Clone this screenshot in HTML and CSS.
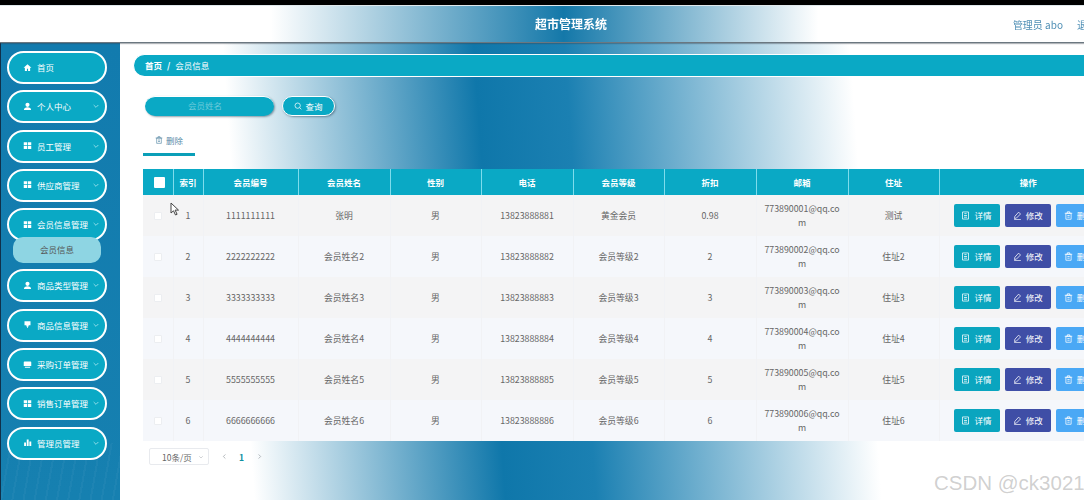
FILE: index.html
```html
<!DOCTYPE html>
<html lang="zh-CN">
<head>
    <meta charset="UTF-8">
    <title>超市管理系统</title>
    <link rel="stylesheet" href="styles.css">
</head>
<body>
    <svg class="sprite" width="0" height="0">
        <symbol id="i-home" viewBox="0 0 24 24"><path fill="currentColor" d="M12 3 1.5 12.5H5V21h5.5v-6h3v6H19v-8.500h3.500z"/></symbol>
        <symbol id="i-user" viewBox="0 0 24 24"><circle fill="currentColor" cx="12" cy="7.500" r="5.500"/><path fill="currentColor" d="M2.500 21.500c0-5 4-7.500 9.500-7.500s9.500 2.500 9.500 7.500z"/></symbol>
        <symbol id="i-grid" viewBox="0 0 24 24"><path fill="currentColor" d="M2 3h9v8H2zM13 3h9v8h-9zM2 13h9v8H2zM13 13h9v8h-9z"/></symbol>
        <symbol id="i-goods" viewBox="0 0 24 24"><path fill="currentColor" d="M4 3h16v11h-5v3h-2v4h-2v-4H9v-3H4z"/></symbol>
        <symbol id="i-order" viewBox="0 0 24 24"><path fill="currentColor" d="M4 4h16a2 2 0 0 1 2 2v10H2V6a2 2 0 0 1 2-2zM5 18h14v2.500H5z"/></symbol>
        <symbol id="i-chart" viewBox="0 0 24 24"><path fill="currentColor" d="M3 12h5v9H3zM10 4h5v17h-5zM17 9h5v12h-5z"/></symbol>
        <symbol id="i-down" viewBox="0 0 24 24"><path fill="none" stroke="currentColor" stroke-width="2.500" d="m5 9 7 7 7-7"/></symbol>
        <symbol id="i-search" viewBox="0 0 24 24"><circle fill="none" stroke="currentColor" stroke-width="2.200" cx="11" cy="11" r="8"/><path fill="none" stroke="currentColor" stroke-width="2.200" d="m17 17 5 5"/></symbol>
        <symbol id="i-doc" viewBox="0 0 24 24"><path fill="none" stroke="currentColor" stroke-width="2" d="M4 2.500h16v19H4zM8 12h8M8 16.500h8M9 7h6"/></symbol>
        <symbol id="i-edit" viewBox="0 0 24 24"><path fill="none" stroke="currentColor" stroke-width="2" d="M15 3l5 5L9 19l-5 1 1-6zM3 23h18"/></symbol>
        <symbol id="i-trash" viewBox="0 0 24 24"><path fill="none" stroke="currentColor" stroke-width="2" d="M5 6h14v16H5zM2 6h20M9 6V2h6v4M9 12h6M9 16.500h6"/></symbol>
        <symbol id="i-left" viewBox="0 0 24 24"><path fill="none" stroke="currentColor" stroke-width="2.500" d="m15 5-7 7 7 7"/></symbol>
        <symbol id="i-right" viewBox="0 0 24 24"><path fill="none" stroke="currentColor" stroke-width="2.500" d="m9 5 7 7-7 7"/></symbol>
    </svg>

    <div class="topbar"></div>
    <header class="header">
        <h1>超市管理系统</h1>
        <div class="user-info"><span>管理员 abo</span><span>退出登录</span></div>
    </header>

    <div class="layout">
        <!-- 侧边菜单 -->
        <aside class="sidebar">
            <a class="menu-item"><svg class="menu-icon"><use href="#i-home"/></svg>首页</a>
            <a class="menu-item"><svg class="menu-icon"><use href="#i-user"/></svg>个人中心<svg class="menu-arrow"><use href="#i-down"/></svg></a>
            <a class="menu-item"><svg class="menu-icon"><use href="#i-grid"/></svg>员工管理<svg class="menu-arrow"><use href="#i-down"/></svg></a>
            <a class="menu-item"><svg class="menu-icon"><use href="#i-grid"/></svg>供应商管理<svg class="menu-arrow"><use href="#i-down"/></svg></a>
            <a class="menu-item"><svg class="menu-icon"><use href="#i-grid"/></svg>会员信息管理<svg class="menu-arrow"><use href="#i-down"/></svg></a>
            <a class="submenu-item">会员信息</a>
            <a class="menu-item"><svg class="menu-icon"><use href="#i-user"/></svg>商品类型管理<svg class="menu-arrow"><use href="#i-down"/></svg></a>
            <a class="menu-item"><svg class="menu-icon"><use href="#i-goods"/></svg>商品信息管理<svg class="menu-arrow"><use href="#i-down"/></svg></a>
            <a class="menu-item"><svg class="menu-icon"><use href="#i-order"/></svg>采购订单管理<svg class="menu-arrow"><use href="#i-down"/></svg></a>
            <a class="menu-item"><svg class="menu-icon"><use href="#i-grid"/></svg>销售订单管理<svg class="menu-arrow"><use href="#i-down"/></svg></a>
            <a class="menu-item"><svg class="menu-icon"><use href="#i-chart"/></svg>管理员管理<svg class="menu-arrow"><use href="#i-down"/></svg></a>
        </aside>

        <main class="main">
            <div class="breadcrumb"><b>首页</b><b class="sep">/</b><span>会员信息</span></div>

            <form class="search-form">
                <div class="search-input">会员姓名</div>
                <button type="button" class="search-btn"><svg class="btn-icon"><use href="#i-search"/></svg>查询</button>
            </form>

            <div class="tabs">
                <div class="tab"><svg class="btn-icon"><use href="#i-trash"/></svg>删除</div>
            </div>

            <table class="data-table">
                <colgroup>
                    <col class="col-30"><col class="col-30"><col class="col-95"><col class="col-92"><col class="col-91"><col class="col-92"><col class="col-91"><col class="col-92"><col class="col-92"><col class="col-91"><col class="col-178">
                </colgroup>
                <thead>
                    <tr>
                        <th><i class="check check-head"></i></th><th>索引</th><th>会员编号</th><th>会员姓名</th><th>性别</th><th>电话</th><th>会员等级</th><th>折扣</th><th>邮箱</th><th>住址</th><th>操作</th>
                    </tr>
                </thead>
                <tbody>
                    <tr>
                        <td><i class="check"></i></td><td>1</td><td>1111111111</td><td>张明</td><td>男</td><td>13823888881</td><td>黄金会员</td><td>0.98</td><td class="email">773890001@qq.com</td><td>测试</td>
                        <td class="actions"><a class="btn btn-info"><svg class="btn-icon"><use href="#i-doc"/></svg>详情</a><a class="btn btn-edit"><svg class="btn-icon"><use href="#i-edit"/></svg>修改</a><a class="btn btn-del"><svg class="btn-icon"><use href="#i-trash"/></svg>删除</a></td>
                    </tr>
                    <tr>
                        <td><i class="check"></i></td><td>2</td><td>2222222222</td><td>会员姓名2</td><td>男</td><td>13823888882</td><td>会员等级2</td><td>2</td><td class="email">773890002@qq.com</td><td>住址2</td>
                        <td class="actions"><a class="btn btn-info"><svg class="btn-icon"><use href="#i-doc"/></svg>详情</a><a class="btn btn-edit"><svg class="btn-icon"><use href="#i-edit"/></svg>修改</a><a class="btn btn-del"><svg class="btn-icon"><use href="#i-trash"/></svg>删除</a></td>
                    </tr>
                    <tr>
                        <td><i class="check"></i></td><td>3</td><td>3333333333</td><td>会员姓名3</td><td>男</td><td>13823888883</td><td>会员等级3</td><td>3</td><td class="email">773890003@qq.com</td><td>住址3</td>
                        <td class="actions"><a class="btn btn-info"><svg class="btn-icon"><use href="#i-doc"/></svg>详情</a><a class="btn btn-edit"><svg class="btn-icon"><use href="#i-edit"/></svg>修改</a><a class="btn btn-del"><svg class="btn-icon"><use href="#i-trash"/></svg>删除</a></td>
                    </tr>
                    <tr>
                        <td><i class="check"></i></td><td>4</td><td>4444444444</td><td>会员姓名4</td><td>男</td><td>13823888884</td><td>会员等级4</td><td>4</td><td class="email">773890004@qq.com</td><td>住址4</td>
                        <td class="actions"><a class="btn btn-info"><svg class="btn-icon"><use href="#i-doc"/></svg>详情</a><a class="btn btn-edit"><svg class="btn-icon"><use href="#i-edit"/></svg>修改</a><a class="btn btn-del"><svg class="btn-icon"><use href="#i-trash"/></svg>删除</a></td>
                    </tr>
                    <tr>
                        <td><i class="check"></i></td><td>5</td><td>5555555555</td><td>会员姓名5</td><td>男</td><td>13823888885</td><td>会员等级5</td><td>5</td><td class="email">773890005@qq.com</td><td>住址5</td>
                        <td class="actions"><a class="btn btn-info"><svg class="btn-icon"><use href="#i-doc"/></svg>详情</a><a class="btn btn-edit"><svg class="btn-icon"><use href="#i-edit"/></svg>修改</a><a class="btn btn-del"><svg class="btn-icon"><use href="#i-trash"/></svg>删除</a></td>
                    </tr>
                    <tr>
                        <td><i class="check"></i></td><td>6</td><td>6666666666</td><td>会员姓名6</td><td>男</td><td>13823888886</td><td>会员等级6</td><td>6</td><td class="email">773890006@qq.com</td><td>住址6</td>
                        <td class="actions"><a class="btn btn-info"><svg class="btn-icon"><use href="#i-doc"/></svg>详情</a><a class="btn btn-edit"><svg class="btn-icon"><use href="#i-edit"/></svg>修改</a><a class="btn btn-del"><svg class="btn-icon"><use href="#i-trash"/></svg>删除</a></td>
                    </tr>
                </tbody>
            </table>

            <div class="pagination">
                <div class="page-size">10条/页<svg class="page-arrow"><use href="#i-down"/></svg></div>
                <svg class="page-nav"><use href="#i-left"/></svg>
                <b class="page-num">1</b>
                <svg class="page-nav"><use href="#i-right"/></svg>
            </div>
        </main>
    </div>

    <!-- 鼠标指针和水印 -->
    <svg class="cursor" viewBox="0 0 10 14"><path d="M1 1v10l2.500-2.200L5.500 13l1.600-.7-2-4.200H8.500z" fill="#fff" stroke="#444" stroke-width="1"/></svg>
    <div class="watermark">CSDN @ck3021</div>
</body>
</html>
```

FILE: styles.css
```css
* {
    margin: 0;
    padding: 0;
    box-sizing: border-box;
    font-family: "Noto Sans CJK SC", "Noto Sans", sans-serif;
}

body {
    position: relative;
    width: 1084px;
    height: 500px;
    display: flex;
    flex-direction: column;
    background: #fff;
    overflow: hidden;
    filter: blur(0.35px);
}

.sprite {
    position: absolute;
}

.topbar {
    height: 5px;
    flex: none;
    background: #000;
}

.header {
    height: 38px;
    flex: none;
    display: flex;
    align-items: center;
    justify-content: flex-end;
    position: relative;
    border-top: 1px solid #dfe8ec;
    border-bottom: 1px solid #6b7780;
    box-shadow: 0 1px 1px rgba(60, 70, 80, 0.4);
    background: linear-gradient(90deg, #fff 25%, #1478a9 52%, #fff 75.500%);
    z-index: 2;
}

.header h1 {
    position: absolute;
    left: 535px;
    font-size: 12px;
    line-height: 16px;
    color: #fff;
    font-weight: 700;
}

.user-info {
    display: flex;
    gap: 14px;
    font-size: 10px;
    color: #4f8fb5;
    white-space: nowrap;
    margin-right: -33px;
}

.layout {
    flex: 1;
    display: flex;
    min-height: 0;
}

/* 侧边菜单 */
.sidebar {
    width: 120px;
    flex: none;
    display: flex;
    flex-direction: column;
    gap: 6.300px;
    padding: 8px 0 0 6px;
    border-left: 1px solid #10304a;
    background:
        repeating-linear-gradient(100deg, rgba(255, 255, 255, 0) 0 9px, rgba(255, 255, 255, 0.035) 9px 11px) 0 400px no-repeat,
        linear-gradient(180deg, #127bae, #1680b0);
}

.menu-item {
    display: flex;
    align-items: center;
    width: 100px;
    height: 33px;
    flex: none;
    padding: 0 5px 1px 14px;
    border: 2px solid #fff;
    border-radius: 17px;
    background: #0aa9c5;
    color: #fff;
    font-size: 8.500px;
    white-space: nowrap;
}

.menu-icon {
    width: 9px;
    height: 9px;
    margin-right: 5px;
    flex: none;
}

.menu-arrow {
    width: 8px;
    height: 8px;
    margin-left: auto;
    color: #a5e3ee;
    flex: none;
}

.submenu-item {
    width: 88px;
    height: 26px;
    flex: none;
    margin: -10.300px 0 0 6px;
    border-radius: 10px;
    background: #8ed5e3;
    color: #555;
    font-size: 8.500px;
    line-height: 25px;
    text-align: center;
    position: relative;
}

/* 主体内容 */
.main {
    flex: 1;
    min-width: 0;
    padding: 11px 0 0 13px;
    overflow: hidden;
    background: linear-gradient(86deg, #fff 13.500%, #0f77aa 38.700%, #1b80b2 47.800%, #fff 76.500%);
}

.breadcrumb {
    display: flex;
    align-items: center;
    gap: 5px;
    height: 23px;
    padding: 0 0 1px 11px;
    border: 1px solid #fff;
    border-right: none;
    border-radius: 12px 0 0 12px;
    background: #0aa9c5;
    color: #fff;
    font-size: 8.500px;
}

.search-form {
    display: flex;
    align-items: center;
    gap: 8px;
    margin: 19px 0 0 12px;
}

.search-input {
    width: 129px;
    height: 20px;
    padding-right: 9px;
    border-radius: 10px;
    border-top: 1px solid #fff;
    background: #0aa9c5;
    box-shadow: 1px 1px 2px rgba(40, 70, 90, 0.5);
    color: #6cc9da;
    font-size: 8.500px;
    line-height: 16px;
    text-align: center;
}

.search-btn {
    display: flex;
    align-items: center;
    justify-content: center;
    gap: 3px;
    width: 53px;
    height: 20px;
    border: 1px solid #fff;
    border-radius: 10px;
    background: #0aa9c5;
    box-shadow: 1px 1px 2px rgba(40, 70, 90, 0.5);
    color: #fff;
    font-size: 8.500px;
}

.btn-icon {
    width: 8px;
    height: 8px;
    flex: none;
}

.tabs {
    display: flex;
    margin: 16px 0 0 10px;
}

.tab {
    display: flex;
    align-items: center;
    justify-content: center;
    gap: 3px;
    width: 52px;
    height: 24px;
    padding-bottom: 5px;
    border-bottom: 3px solid #0a9fb8;
    color: #5a8ca8;
    font-size: 8.500px;
}

.data-table {
    width: 974px;
    margin: 13px 0 0 10px;
    border-collapse: collapse;
    table-layout: fixed;
    font-size: 8.800px;
    color: #666;
}

.col-30 { width: 30px; }
.col-91 { width: 91px; }
.col-92 { width: 92px; }
.col-95 { width: 95px; }
.col-178 { width: 178px; }

.data-table th {
    height: 26px;
    background: #0aa9c5;
    border-left: 1px solid #7fdcec;
    color: #fff;
    font-size: 8.500px;
    font-weight: 700;
}

.data-table th:first-child {
    border-left: none;
}

.data-table td {
    height: 41px;
    padding: 0 6px;
    text-align: center;
    line-height: 13.500px;
    border-left: 1px solid #f1f2f5;
}

.data-table td:first-child {
    border-left: none;
}

.data-table tbody tr:nth-child(odd) {
    background: #f4f4f5;
}

.data-table tbody tr:nth-child(even) {
    background: #f5f7fb;
}

.email {
    word-break: break-all;
}

.check {
    display: block;
    width: 8px;
    height: 8px;
    margin: 0 auto;
    background: #fff;
    border: 1px solid #eceef1;
    border-radius: 1px;
}

.check-head {
    width: 11px;
    height: 11px;
    margin: 0 0 0 11px;
    border: none;
}

.data-table td.actions {
    padding: 0 0 0 14px;
    white-space: nowrap;
    text-align: left;
}

.btn {
    display: inline-flex;
    align-items: center;
    justify-content: center;
    gap: 4px;
    width: 46px;
    height: 23px;
    margin-right: 5.200px;
    border-radius: 2px;
    color: #fff;
    font-size: 8.500px;
    vertical-align: middle;
}

.btn .btn-icon {
    width: 9px;
    height: 9px;
}

.btn-info { background: #0aa5bf; }
.btn-edit { background: #3f4ea6; }
.btn-del { background: #4aa8f5; }

.pagination {
    display: flex;
    align-items: center;
    margin: 7px 0 0 16px;
    height: 17px;
    color: #666;
    font-size: 8.500px;
}

.page-size {
    display: flex;
    align-items: center;
    justify-content: space-between;
    width: 60px;
    height: 17px;
    padding: 0 4px 0 12px;
    border: 1px solid #e8eaee;
    border-radius: 2px;
    background: #fff;
}

.page-arrow {
    width: 6px;
    height: 6px;
    color: #b5b8bd;
}

.page-nav {
    width: 7px;
    height: 7px;
    color: #9aa0a6;
    margin-left: 12px;
}

.page-num {
    margin-left: 11px;
    color: #0e8f9f;
}

/* 鼠标指针和水印 */
.cursor {
    position: absolute;
    left: 170px;
    top: 202px;
    width: 10px;
    height: 14px;
}

.watermark {
    position: absolute;
    left: 934px;
    top: 470px;
    font-family: "Liberation Sans", sans-serif;
    font-size: 20.500px;
    line-height: 26px;
    white-space: nowrap;
    color: rgba(150, 150, 150, 0.45);
}
```
